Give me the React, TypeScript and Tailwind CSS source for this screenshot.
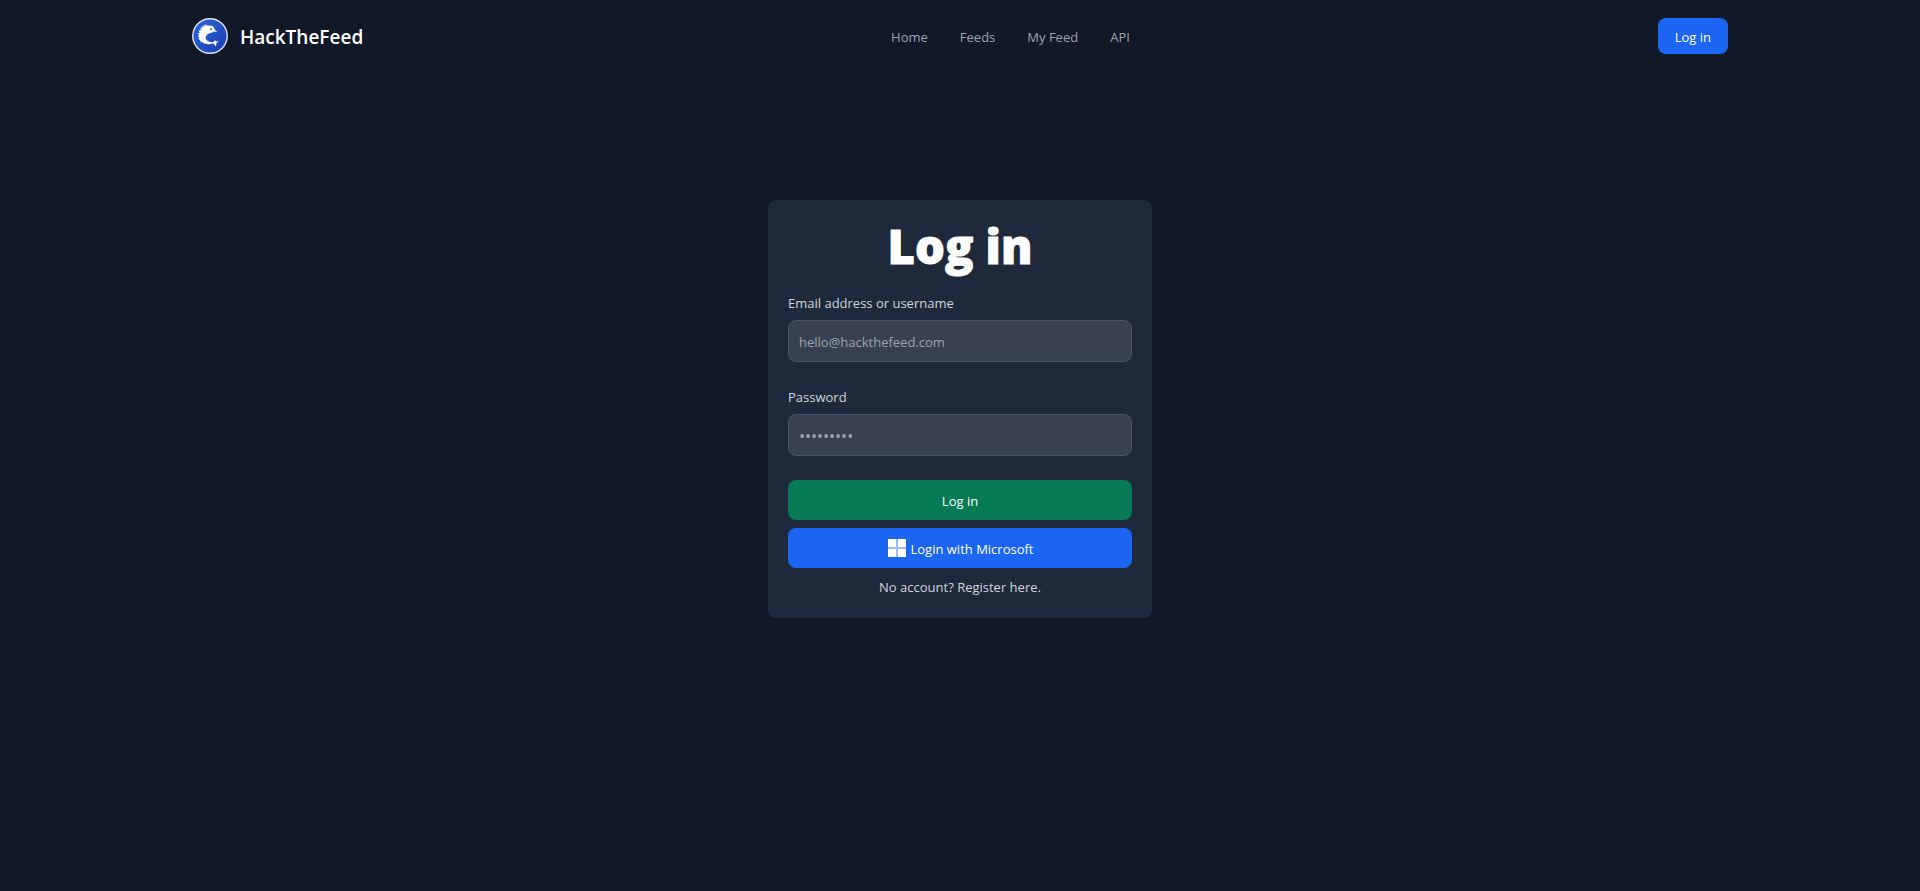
import { useState } from 'react'

const navLinks = [
  { href: '/', label: 'Home' },
  { href: '/feeds', label: 'Feeds' },
  { href: '/my-feed', label: 'My Feed' },
  { href: '/api', label: 'API' }
]

function Logo() {
  return (
    <svg className="h-9 w-9" viewBox="0 0 36 36" aria-hidden="true">
      <defs>
        <linearGradient id="logo-fill" x1="0" y1="0" x2="1" y2="1">
          <stop offset="0" stopColor="#2c66dc" />
          <stop offset="1" stopColor="#1b3fb0" />
        </linearGradient>
      </defs>
      <circle cx="18" cy="18" r="17.2" fill="url(#logo-fill)" stroke="#dfe5f0" strokeWidth="1.4" />
      <path
        fill="#fff"
        d="M13.4 5.8 L15.6 7.8 L17 7.6 C20 7.4 22.4 9 22.8 11.4 L25.2 13.8 L21.8 13.4 C20.6 14.6 18.6 14.6 17 15.4 C13.8 17 12.8 19.6 14.4 21.8 C15.8 23.8 18.8 24.6 21.6 24 C22 22.8 22.8 22.4 23.8 22.4 C23.6 23.2 23.8 23.8 24.4 23.8 C25 23.7 25.4 23.2 26 22.6 C26.2 24 25.4 25 24.2 25.2 C24.6 26.2 24.4 27.4 23.6 28.4 C23 27.2 22.2 26.2 21 25.6 C16.8 27 12 26.2 9.4 23.6 L7.8 23.4 L8.2 22.2 L6.6 21 L7.4 19.8 L5.8 18.2 L7 17.4 L5.8 15.2 L7.6 15 L6.6 12.4 L8.8 12.6 L8.2 10 L10.4 10.6 L9.2 8.2 L12 9 L11 7 L13.8 7.8 Z"
      />
      <circle cx="19" cy="11.2" r="0.9" fill="#1f4bb8" />
    </svg>
  )
}

function MicrosoftIcon() {
  return (
    <svg className="h-5 w-5" viewBox="0 0 20 20" aria-hidden="true">
      <path fill="#9db9f8" d="M1 1h18v18H1z" />
      <path fill="#fff" d="M1 1h8v8H1zM11 1h8v8h-8zM1 11h8v8H1zM11 11h8v8h-8z" />
    </svg>
  )
}

interface FieldProps {
  id: string
  label: string
  type: string
  placeholder: string
  value: string
  onChange: (value: string) => void
}

function Field({ id, label, type, placeholder, value, onChange }: FieldProps) {
  return (
    <div className="mb-6">
      <label htmlFor={id} className="block mb-1.5 leading-[22px] text-gray-300">
        {label}
      </label>
      <input
        id={id}
        type={type}
        placeholder={placeholder}
        value={value}
        onChange={(e) => onChange(e.target.value)}
        className="block w-full h-[42px] px-2.5 pt-0.5 text-white bg-[#374151] border border-[#475569] rounded-lg placeholder:text-[#9ca3af] [&[type=password]]:text-base"
      />
    </div>
  )
}

export default function App() {
  const [email, setEmail] = useState('')
  const [password, setPassword] = useState('')

  return (
    <div className="min-h-screen bg-[#111827] text-[13px] leading-5 font-['Segoe_UI','Open_Sans',sans-serif]">
      <header className="max-w-screen-2xl mx-auto flex items-center justify-between py-[18px]">
        <a href="/" className="flex items-center gap-3">
          <Logo />
          <span className="pt-0.5 text-[19px] font-semibold text-white">HackTheFeed</span>
        </a>
        <nav className="flex gap-8 pt-0.5 text-[#9ca3af]">
          {navLinks.map((link) => (
            <a key={link.href} href={link.href} className="hover:text-white">
              {link.label}
            </a>
          ))}
        </nav>
        <button type="button" className="h-9 px-[17px] pt-0.5 text-white bg-[#1c64f2] rounded-lg">
          Log in
        </button>
      </header>

      <main className="mt-32 mx-auto max-w-sm p-5 bg-[#1e293b] rounded-lg">
        <h1 className="mb-5 text-[47px] leading-[52px] font-extrabold text-center text-white [-webkit-text-stroke:1px_white]">
          Log in
        </h1>
        <form onSubmit={(e) => e.preventDefault()}>
          <Field
            id="email"
            label="Email address or username"
            type="text"
            placeholder="hello@hackthefeed.com"
            value={email}
            onChange={setEmail}
          />
          <Field
            id="password"
            label="Password"
            type="password"
            placeholder="•••••••••"
            value={password}
            onChange={setPassword}
          />
          <button type="submit" className="w-full h-10 pt-0.5 text-white bg-[#057a55] rounded-lg">
            Log in
          </button>
          <button
            type="button"
            className="mt-2 w-full h-10 flex items-center justify-center gap-1 text-white bg-[#1c64f2] rounded-lg"
          >
            <MicrosoftIcon />
            <span className="pt-0.5">Login with Microsoft</span>
          </button>
        </form>
        <p className="mt-2 leading-[22px] text-center text-gray-300">
          <a href="/register">No account? Register here.</a>
        </p>
      </main>
    </div>
  )
}
